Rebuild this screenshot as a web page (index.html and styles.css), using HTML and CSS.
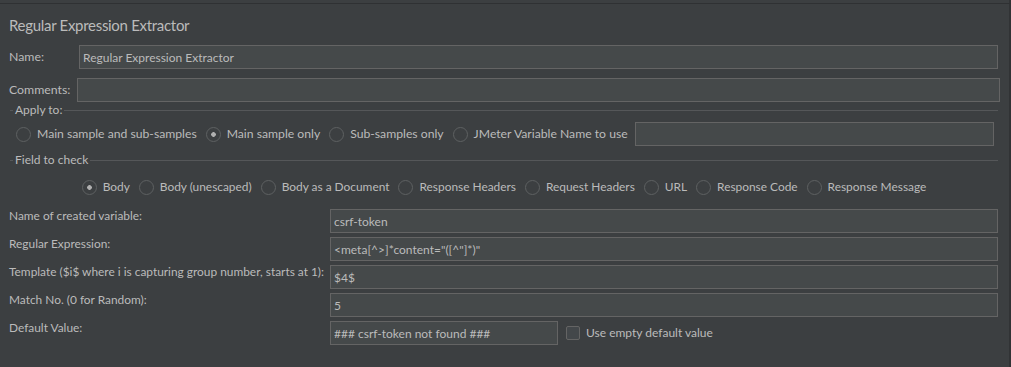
FILE: index.html
```html
<!DOCTYPE html>
<html lang="en">
<head>
    <meta charset="UTF-8">
    <title>Regular Expression Extractor</title>
    <link rel="stylesheet" href="styles.css">
</head>
<body>
    <div class="top-bar"></div>
    <div class="panel">
        <h1 class="title">Regular Expression Extractor</h1>

        <div class="row">
            <label class="row-label name-label">Name:</label>
            <input class="text-field" type="text" value="Regular Expression Extractor">
        </div>
        <div class="row">
            <label class="row-label comments-label">Comments:</label>
            <input class="text-field comments-field" type="text" value="">
        </div>

        <fieldset class="group">
            <legend>Apply to:</legend>
            <div class="radio-row apply-row">
                <label class="radio"><input type="radio" name="scope">Main sample and sub-samples</label>
                <label class="radio"><input type="radio" name="scope" checked>Main sample only</label>
                <label class="radio"><input type="radio" name="scope">Sub-samples only</label>
                <label class="radio"><input type="radio" name="scope">JMeter Variable Name to use</label>
                <input class="text-field var-field" type="text" value="">
            </div>
        </fieldset>

        <fieldset class="group field-group">
            <legend>Field to check</legend>
            <div class="radio-row field-row">
                <label class="radio"><input type="radio" name="field" checked>Body</label>
                <label class="radio"><input type="radio" name="field">Body (unescaped)</label>
                <label class="radio"><input type="radio" name="field">Body as a Document</label>
                <label class="radio"><input type="radio" name="field">Response Headers</label>
                <label class="radio"><input type="radio" name="field">Request Headers</label>
                <label class="radio"><input type="radio" name="field">URL</label>
                <label class="radio"><input type="radio" name="field">Response Code</label>
                <label class="radio"><input type="radio" name="field">Response Message</label>
            </div>
        </fieldset>

        <div class="form-grid">
            <label class="grid-label">Name of created variable:</label>
            <input class="text-field" type="text" value="csrf-token">

            <label class="grid-label">Regular Expression:</label>
            <input class="text-field" type="text" value="&lt;meta[^&gt;]*content=&quot;([^&quot;]*)&quot;">

            <label class="grid-label">Template ($i$ where i is capturing group number, starts at 1):</label>
            <input class="text-field" type="text" value="$4$">

            <label class="grid-label">Match No. (0 for Random):</label>
            <input class="text-field" type="text" value="5">

            <label class="grid-label">Default Value:</label>
            <div class="default-row">
                <input class="text-field default-field" type="text" value="### csrf-token not found ###">
                <label class="check"><input type="checkbox">Use empty default value</label>
            </div>
        </div>
    </div>
</body>
</html>
```

FILE: styles.css
```css
html, body {
    height: 100%;
}
body {
    margin: 0;
    background-color: #3c3f41;
    color: #bbbbbb;
    font-family: Lato, "Noto Sans", sans-serif;
    font-size: 12px;
    line-height: 16px;
    box-shadow: inset -2px 0 0 #313335;
}
.top-bar {
    height: 3px;
    border-bottom: 1px solid #2f3133;
}
.panel {
    padding: 0 13px 0 9px;
}
.title {
    margin: 11px 0 10px;
    font-size: 15px;
    font-weight: normal;
    letter-spacing: -0.3px;
    line-height: 20px;
    color: #bbbbbb;
}
.row {
    display: flex;
    align-items: center;
    font-size: 12.3px;
}
.row + .row {
    margin-top: 9px;
}
.row-label {
    flex: none;
}
.name-label {
    width: 70px;
}
.comments-label {
    width: 68px;
}
.text-field {
    box-sizing: border-box;
    height: 24px;
    padding: 0 3px;
    border: 1px solid #646464;
    background-color: #45494a;
    color: #bbbbbb;
    font-family: inherit;
    font-size: 12px;
    outline: none;
    flex: 1;
    min-width: 0;
}
.comments-field {
    margin-right: -2px;
}
.group {
    margin: 0 0 0 1px;
    padding: 0;
    min-width: 0;
    border: none;
    border-top: 1px solid #555759;
}
.group legend {
    margin-left: 3px;
    padding: 0 2px;
    line-height: 16px;
    font-size: 12px;
}
.field-group {
    margin-top: 6px;
}
.radio-row {
    display: flex;
    align-items: center;
    gap: 9px;
    height: 24px;
    font-size: 12.2px;
}
.apply-row {
    padding: 4px 4px 0 6px;
}
.field-row {
    padding-top: 7px;
    justify-content: center;
    font-size: 11.9px;
}
.radio {
    display: flex;
    align-items: center;
    gap: 6px;
    white-space: nowrap;
}
.radio input {
    appearance: none;
    margin: 0;
    width: 15px;
    height: 15px;
    border: 1px solid #5e6162;
    border-radius: 50%;
    background-color: #3c3f41;
}
.radio input:checked {
    background: radial-gradient(circle, #b0b0b0 0 2px, #3c3f41 2.6px);
}
.var-field {
    margin-left: -2px;
}
.form-grid {
    display: grid;
    grid-template-columns: 321px 1fr;
    row-gap: 4px;
    margin-top: 10px;
}
.grid-label {
    align-self: start;
    margin-top: -1px;
    font-size: 11.9px;
    white-space: nowrap;
}
.default-row {
    display: flex;
    align-items: center;
}
.default-field {
    flex: none;
    width: 228px;
}
.check {
    display: flex;
    align-items: center;
    gap: 6px;
    margin-left: 8px;
}
.check input {
    appearance: none;
    margin: 0;
    width: 14px;
    height: 14px;
    border: 1px solid #646464;
    border-radius: 2px;
    background-color: #43474a;
}
```
